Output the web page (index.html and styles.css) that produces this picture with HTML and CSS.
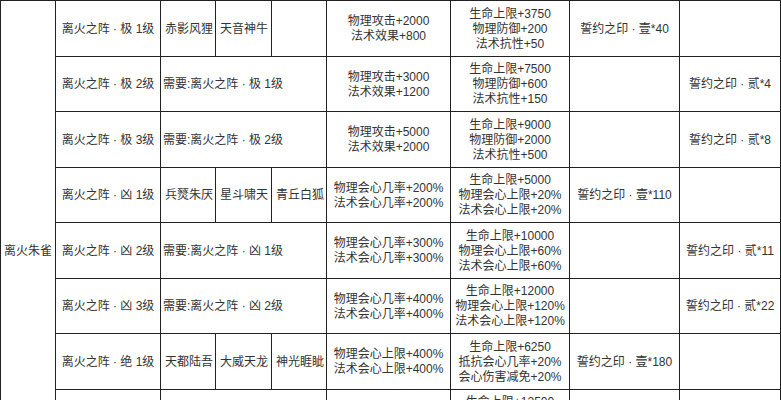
FILE: index.html
```html
<!DOCTYPE html>
<html lang="zh">
<head>
<meta charset="utf-8">
<link rel="stylesheet" href="styles.css">
</head>
<body>
<table class="grid">
  <colgroup>
    <col class="c-name"><col class="c-level"><col class="c-sub"><col class="c-sub2"><col class="c-sub">
    <col class="c-attack"><col class="c-life"><col class="c-seal1"><col class="c-seal2">
  </colgroup>
  <tbody>
    <tr>
      <td class="name" rowspan="9">离火朱雀</td>
      <td class="level">离火之阵 · 极 1级</td>
      <td class="sub">赤影风狸</td>
      <td class="sub">天音神牛</td>
      <td class="sub"></td>
      <td class="stat">物理攻击+2000<br>法术效果+800</td>
      <td class="stat">生命上限+3750<br>物理防御+200<br>法术抗性+50</td>
      <td class="stat">誓约之印 · 壹*40</td>
      <td class="stat"></td>
    </tr>
    <tr>
      <td class="level">离火之阵 · 极 2级</td>
      <td class="need" colspan="3">需要:离火之阵 · 极 1级</td>
      <td class="stat">物理攻击+3000<br>法术效果+1200</td>
      <td class="stat">生命上限+7500<br>物理防御+600<br>法术抗性+150</td>
      <td class="stat"></td>
      <td class="stat">誓约之印 · 贰*4</td>
    </tr>
    <tr>
      <td class="level">离火之阵 · 极 3级</td>
      <td class="need" colspan="3">需要:离火之阵 · 极 2级</td>
      <td class="stat">物理攻击+5000<br>法术效果+2000</td>
      <td class="stat">生命上限+9000<br>物理防御+2000<br>法术抗性+500</td>
      <td class="stat"></td>
      <td class="stat">誓约之印 · 贰*8</td>
    </tr>
    <tr>
      <td class="level">离火之阵 · 凶 1级</td>
      <td class="sub">兵燹朱厌</td>
      <td class="sub">星斗啸天</td>
      <td class="sub">青丘白狐</td>
      <td class="stat">物理会心几率+200%<br>法术会心几率+200%</td>
      <td class="stat">生命上限+5000<br>物理会心上限+20%<br>法术会心上限+20%</td>
      <td class="stat">誓约之印 · 壹*110</td>
      <td class="stat"></td>
    </tr>
    <tr>
      <td class="level">离火之阵 · 凶 2级</td>
      <td class="need" colspan="3">需要:离火之阵 · 凶 1级</td>
      <td class="stat">物理会心几率+300%<br>法术会心几率+300%</td>
      <td class="stat">生命上限+10000<br>物理会心上限+60%<br>法术会心上限+60%</td>
      <td class="stat"></td>
      <td class="stat">誓约之印 · 贰*11</td>
    </tr>
    <tr>
      <td class="level">离火之阵 · 凶 3级</td>
      <td class="need" colspan="3">需要:离火之阵 · 凶 2级</td>
      <td class="stat">物理会心几率+400%<br>法术会心几率+400%</td>
      <td class="stat">生命上限+12000<br>物理会心上限+120%<br>法术会心上限+120%</td>
      <td class="stat"></td>
      <td class="stat">誓约之印 · 贰*22</td>
    </tr>
    <tr>
      <td class="level">离火之阵 · 绝 1级</td>
      <td class="sub">天都陆吾</td>
      <td class="sub">大威天龙</td>
      <td class="sub">神光睚眦</td>
      <td class="stat">物理会心上限+400%<br>法术会心上限+400%</td>
      <td class="stat">生命上限+6250<br>抵抗会心几率+20%<br>会心伤害减免+20%</td>
      <td class="stat">誓约之印 · 壹*180</td>
      <td class="stat"></td>
    </tr>
    <tr>
      <td class="level">离火之阵 · 绝 2级</td>
      <td class="need" colspan="3">需要:离火之阵 · 绝 1级</td>
      <td class="stat">物理会心上限+600%<br>法术会心上限+600%</td>
      <td class="stat">生命上限+12500<br>抵抗会心几率+40%<br>会心伤害减免+40%</td>
      <td class="stat"></td>
      <td class="stat">誓约之印 · 贰*14</td>
    </tr>
    <tr>
      <td class="level">离火之阵 · 绝 3级</td>
      <td class="need" colspan="3">需要:离火之阵 · 绝 2级</td>
      <td class="stat">物理会心上限+800%<br>法术会心上限+800%</td>
      <td class="stat">生命上限+18750<br>抵抗会心几率+60%<br>会心伤害减免+60%</td>
      <td class="stat"></td>
      <td class="stat">誓约之印 · 贰*28</td>
    </tr>
  </tbody>
</table>
</body>
</html>
```
FILE: styles.css
```css
html, body {
  margin: 0;
  padding: 0;
  background: #ffffff;
}

body {
  font-family: "Liberation Sans", "Noto Sans CJK SC", sans-serif;
  font-size: 12px;
  line-height: 15px;
  color: #333333;
}

.grid {
  border-collapse: collapse;
  table-layout: fixed;
  width: 781px;
}

.grid td {
  border: 1px solid #222222;
  padding: 2px 0 0 0;
  vertical-align: middle;
  white-space: nowrap;
  overflow: hidden;
}

.grid tr {
  height: 55.5px;
}

.c-name { width: 55px; }
.c-level { width: 105px; }
.c-sub { width: 55px; }
.c-sub2 { width: 56px; }
.c-attack { width: 124px; }
.c-life { width: 119px; }
.c-seal1 { width: 110px; }
.c-seal2 { width: 101px; }

.grid .name {
  text-align: center;
}

.grid .level {
  text-align: center;
}

.grid .sub {
  text-align: left;
  padding-left: 4px;
}

.grid .need {
  text-align: left;
  padding-left: 2px;
}

.grid .stat {
  text-align: center;
}
```
